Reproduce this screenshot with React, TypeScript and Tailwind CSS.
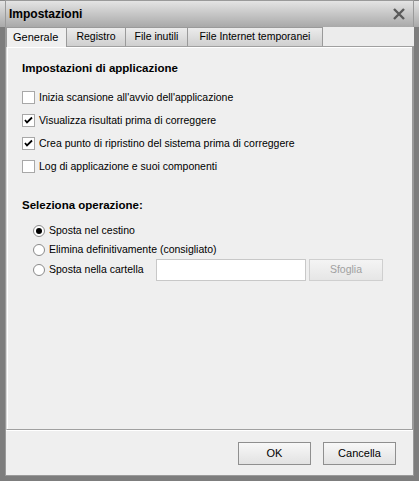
import React from "react";

const font = { fontFamily: '"Liberation Sans", Arial, sans-serif' };

function Check({ checked, label }: { checked: boolean; label: string }) {
  return (
    <div className="flex items-center h-[13px] gap-[4px]">
      <div className="w-[13px] h-[13px] border border-[#a8a8a8] bg-white flex items-center justify-center">
        {checked && (
          <svg width="9" height="9" viewBox="0 0 9 9">
            <path d="M1 4 L3 6.5 L8 1.5" stroke="#000" strokeWidth="1.8" fill="none" />
          </svg>
        )}
      </div>
      <span>{label}</span>
    </div>
  );
}

function Radio({ checked, label }: { checked: boolean; label: string }) {
  return (
    <div className="flex items-center gap-[4px] whitespace-nowrap">
      <div className="w-[12px] h-[12px] rounded-full border border-[#8a8a8a] bg-white flex items-center justify-center">
        {checked && <div className="w-[6px] h-[6px] rounded-full bg-black" />}
      </div>
      <span>{label}</span>
    </div>
  );
}

export default function App() {
  return (
    <div
      className="w-[419px] h-[481px] bg-[#efefef] text-[10.5px] text-black flex flex-col border-[5px] border-[#7d7d7d] border-t-0 relative"
      style={font}
    >
      <div className="absolute inset-0 border border-[#9a9a9a] pointer-events-none" />
      {/* title bar */}
      <div className="h-[27px] -mx-[5px] px-[9px] flex items-center justify-between bg-gradient-to-b from-[#e4e4e4] to-[#a9a9a9] border-t border-[#8a8a8a]">
        <span className="font-bold text-[12px] [text-shadow:1px_1px_0_#bdbdbd]">Impostazioni</span>
        <svg width="14" height="14" viewBox="0 0 14 14" className="mr-[4px]">
          <path d="M2 2 L12 12 M12 2 L2 12" stroke="#5a5a5a" strokeWidth="2.4" />
        </svg>
      </div>
      {/* tabs */}
      <div className="flex items-end h-[19px] ml-[1px] bg-[#ececec] relative z-10">
        <div className="h-[20px] w-[61px] px-[6px] flex items-center bg-[#efefef] border border-b-0 border-[#9a9a9a] -mb-[1px] text-[11px]">
          Generale
        </div>
        {[
          { t: "Registro", w: "w-[59px]" },
          { t: "File inutili", w: "w-[62px]" },
          { t: "File Internet temporanei", w: "w-[135px]" },
        ].map(({ t, w }) => (
          <div
            key={t}
            className={`${w} h-[19px] flex items-center justify-center bg-gradient-to-b from-[#ececec] to-[#cfcfcf] border border-l-0 border-b-0 border-[#9a9a9a]`}
          >
            {t}
          </div>
        ))}
      </div>
      {/* panel */}
      <div className="mx-[1px] h-[384px] border border-[#a0a0a0] border-l-[#d8d8d8] border-r-[#9a9a9a] bg-[#efefef] px-[15px] pt-[13px] shadow-[inset_1px_1px_0_#ffffff]">
        <div className="font-bold text-[11.5px] leading-[16px]">Impostazioni di applicazione</div>
        <div className="mt-[15px] flex flex-col gap-[10px]">
          <Check checked={false} label="Inizia scansione all'avvio dell'applicazione" />
          <Check checked={true} label="Visualizza risultati prima di correggere" />
          <Check checked={true} label="Crea punto di ripristino del sistema prima di correggere" />
          <Check checked={false} label="Log di applicazione e suoi componenti" />
        </div>
        <div className="font-bold text-[11.5px] leading-[16px] mt-[24px]">Seleziona operazione:</div>
        <div className="mt-[8px] pl-[11px] flex flex-col">
          <div className="h-[19px] flex items-center">
            <Radio checked={true} label="Sposta nel cestino" />
          </div>
          <div className="h-[19px] flex items-center">
            <Radio checked={false} label="Elimina definitivamente (consigliato)" />
          </div>
          <div className="h-[22px] flex items-center">
            <div className="w-[123px]">
              <Radio checked={false} label="Sposta nella cartella" />
            </div>
            <div className="w-[150px] h-[22px] bg-white border border-[#c8c8c8]" />
            <div className="ml-[3px] w-[74px] h-[22px] border border-[#cfcfcf] bg-gradient-to-b from-[#f4f4f4] to-[#e6e6e6] flex items-center justify-center text-[#a0a0a0]">
              Sfoglia
            </div>
          </div>
        </div>
      </div>
      {/* bottom */}
      <div className="flex-1 flex items-center justify-end gap-[12px] pr-[18px] border-t border-white">
        {["OK", "Cancella"].map((t) => (
          <div
            key={t}
            className="w-[73px] h-[23px] border border-[#8f8f8f] bg-gradient-to-b from-[#f8f8f8] to-[#e2e2e2] flex items-center justify-center text-[11px]"
          >
            {t}
          </div>
        ))}
      </div>
    </div>
  );
}
